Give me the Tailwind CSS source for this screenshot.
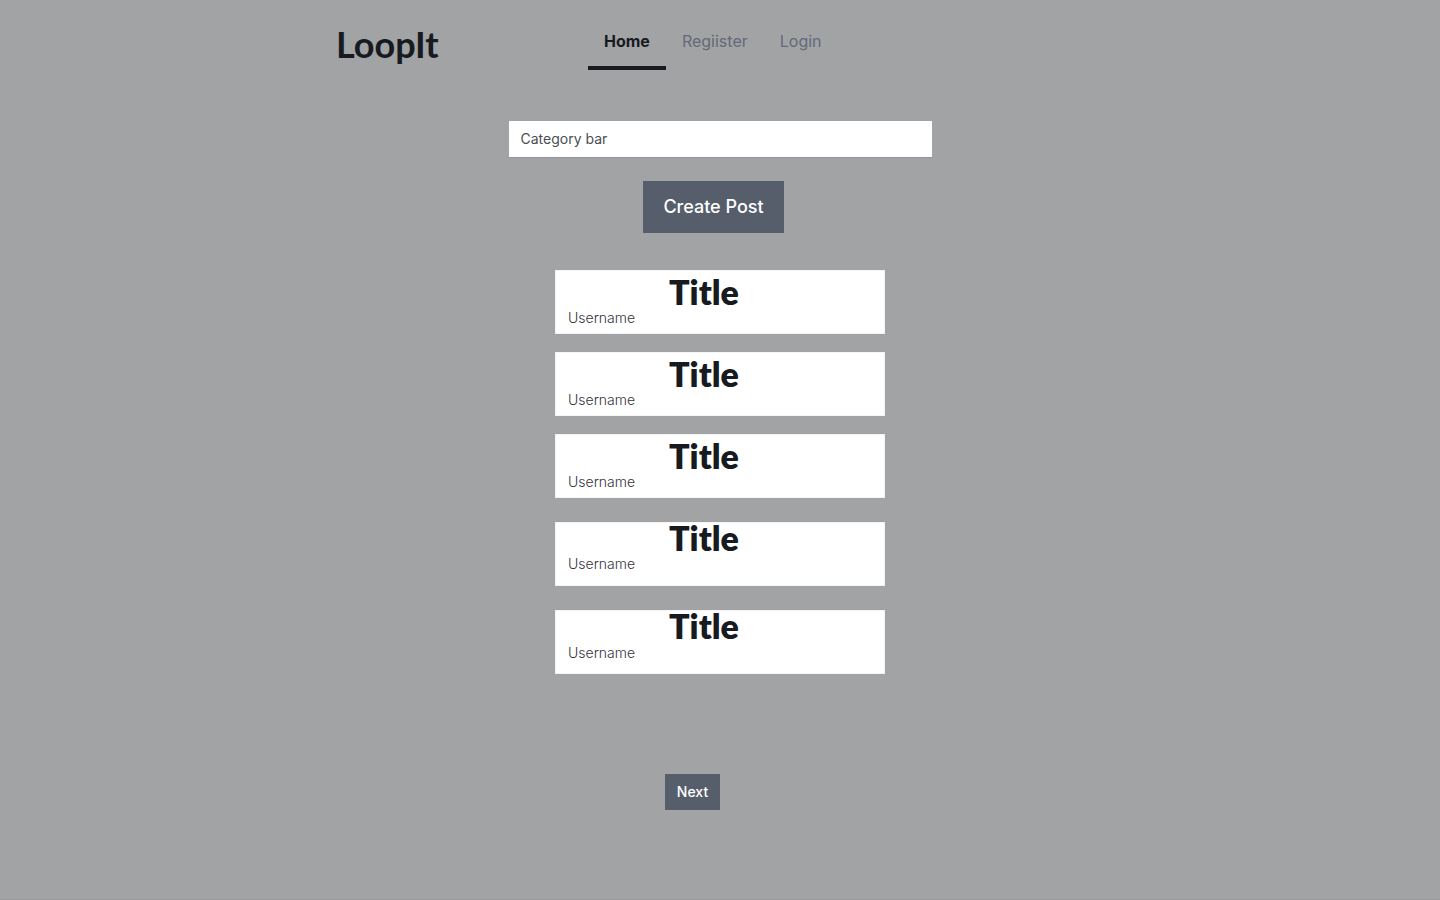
<!DOCTYPE html>
<html lang="en">
<head>
<meta charset="utf-8">
<meta name="viewport" content="width=device-width, initial-scale=1">
<title>LoopIt</title>
<script src="https://cdn.jsdelivr.net/npm/@tailwindcss/browser@4"></script>
</head>
<body class="flex min-h-screen flex-col border-b border-[#97999b] bg-[#a1a3a5] font-['Inter',sans-serif] text-[#171a1f]">
<header class="mx-auto flex w-full max-w-3xl pt-4">
  <h1 class="w-63 pt-1 font-['Lato',sans-serif] text-4xl leading-12 font-bold">LoopIt</h1>
  <nav class="flex text-base leading-6">
    <a href="#" aria-current="page" class="h-[54px] border-b-4 border-[#171a1f] px-4 pt-[13px] font-bold">Home</a>
    <a href="#" class="px-4 pt-[13px] text-[#626a78]">Regiister</a>
    <a href="#" class="px-4 pt-[13px] text-[#626a78]">Login</a>
  </nav>
</header>
<main class="flex flex-col items-center pt-[51px] pb-[89px]">
  <input type="text" aria-label="Category bar" placeholder="Category bar" class="h-[37px] w-full max-w-[423px] border-b border-[#9095a0] bg-white px-3 pb-0.5 text-sm placeholder:text-[#4a4d52]">
  <button type="button" class="mt-[23px] mr-[13px] h-[52px] bg-[#565e6c] px-5 text-lg font-medium text-white">Create Post</button>
  <div class="mt-[37px] flex w-full max-w-[330px] flex-col">
    <article class="h-16 border border-[#f3f4f6] bg-white px-3">
      <h2 class="pt-[5px] pr-8 text-center font-['Lato',sans-serif] text-[34px] leading-8 font-extrabold">Title</h2>
      <p class="text-sm leading-5 font-light text-[#323539]">Username</p>
    </article>
    <article class="mt-[18px] h-16 border border-[#f3f4f6] bg-white px-3">
      <h2 class="pt-[5px] pr-8 text-center font-['Lato',sans-serif] text-[34px] leading-8 font-extrabold">Title</h2>
      <p class="text-sm leading-5 font-light text-[#323539]">Username</p>
    </article>
    <article class="mt-[18px] h-16 border border-[#f3f4f6] bg-white px-3">
      <h2 class="pt-[5px] pr-8 text-center font-['Lato',sans-serif] text-[34px] leading-8 font-extrabold">Title</h2>
      <p class="text-sm leading-5 font-light text-[#323539]">Username</p>
    </article>
    <article class="mt-6 h-16 border border-[#f3f4f6] bg-white px-3">
      <h2 class="pr-8 text-center font-['Lato',sans-serif] text-[34px] leading-[30px] font-extrabold">Title</h2>
      <p class="pt-px text-sm leading-5 font-light text-[#323539]">Username</p>
    </article>
    <article class="mt-6 h-16 border border-[#f3f4f6] bg-white px-3">
      <h2 class="pr-8 text-center font-['Lato',sans-serif] text-[34px] leading-[30px] font-extrabold">Title</h2>
      <p class="pt-0.5 text-sm leading-5 font-light text-[#323539]">Username</p>
    </article>
  </div>
  <button type="button" class="mt-[100px] mr-[55px] h-9 bg-[#565e6c] px-3 text-sm font-medium text-white">Next</button>
</main>
</body>
</html>
